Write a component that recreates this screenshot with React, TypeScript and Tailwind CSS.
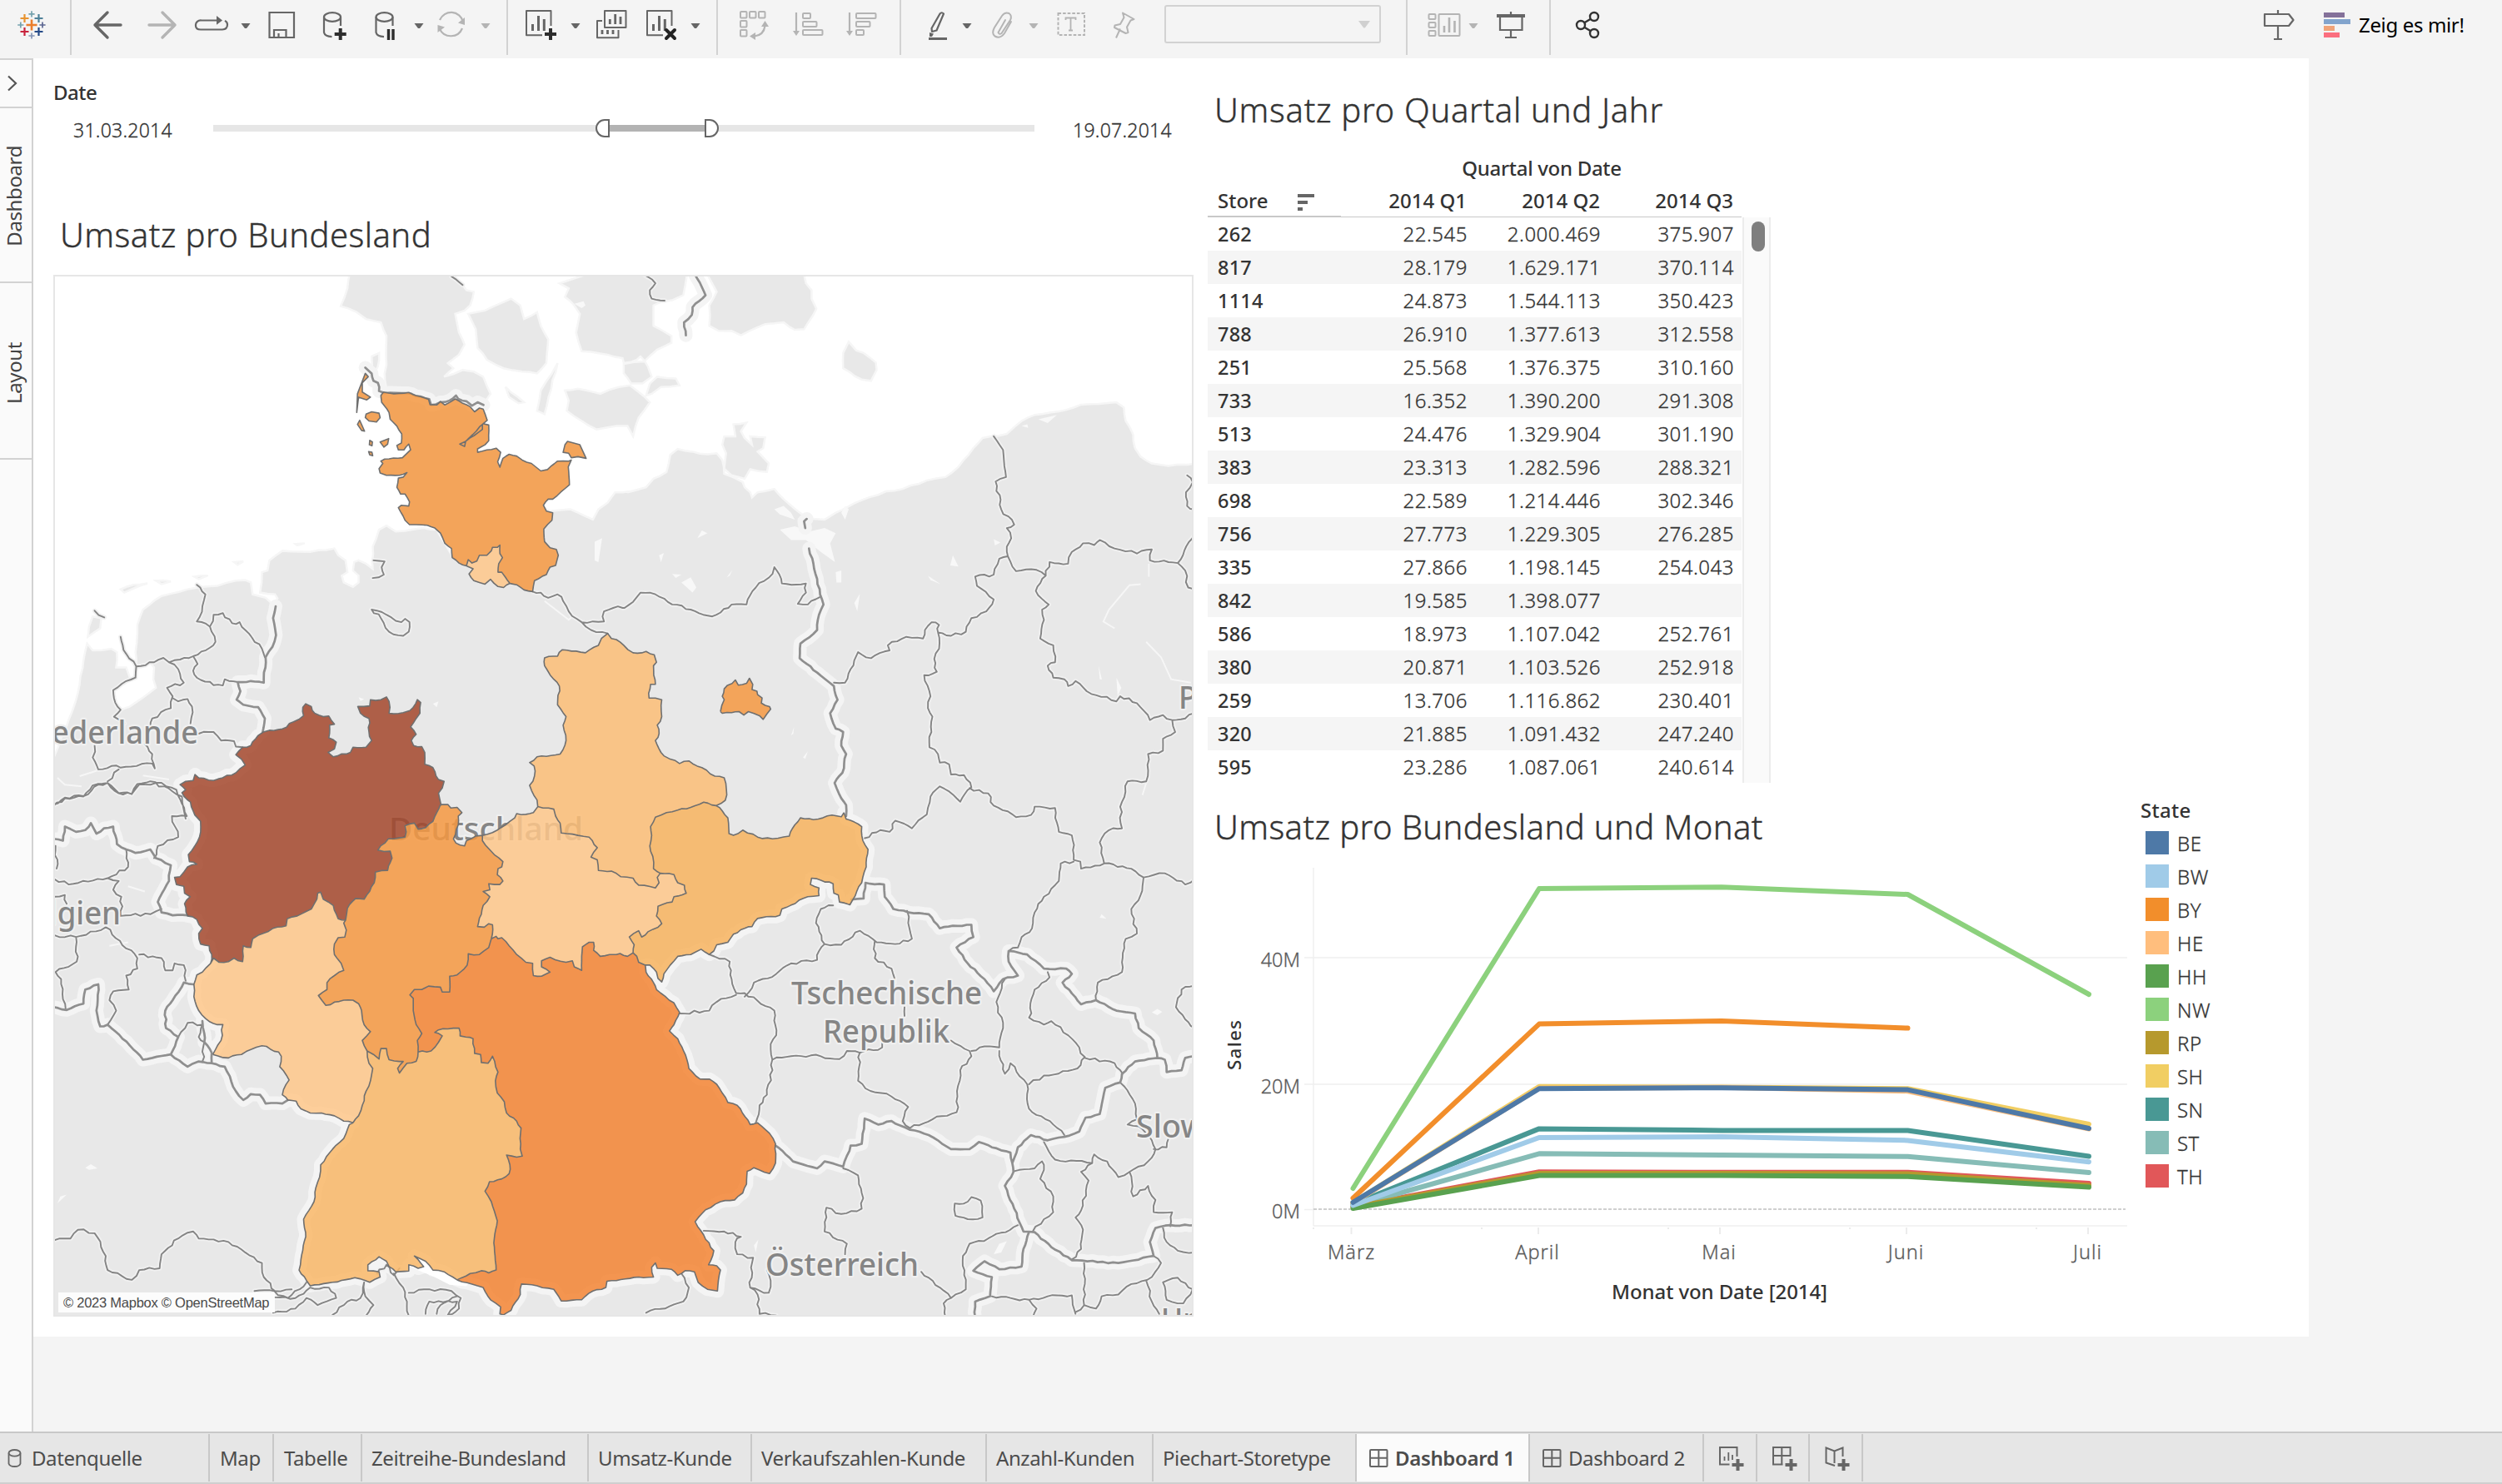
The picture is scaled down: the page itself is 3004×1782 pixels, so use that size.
import React from "react";

/* ------------------------------------------------------------------ */
/* Toolbar                                                             */
/* ------------------------------------------------------------------ */

const DARK = "#666666";
const LIGHT = "#b4b4b4";

function Cell({ x, w, children }: { x: number; w: number; children?: React.ReactNode }) {
  return (
    <svg width={w} height={70} viewBox={`${x} 0 ${w} 70`} className="shrink-0" fill="none">
      {children}
    </svg>
  );
}

function Sep() {
  return <div className="h-[66px] w-[2px] shrink-0 bg-[#d2d2d2]" />;
}

function Caret({ x, c = DARK }: { x: number; c?: string }) {
  return <path d={`M${x - 5.5} 28h11l-4 5.4q-1.5 1.4-3 0z`} fill={c} />;
}

function Plus({ x, y, r, w, c }: { x: number; y: number; r: number; w: number; c: string }) {
  return <path d={`M${x - r} ${y}h${r * 2}M${x} ${y - r}v${r * 2}`} stroke={c} strokeWidth={w} />;
}

function ChartSheet({ dx }: { dx: number }) {
  return (
    <g transform={`translate(${dx} 0)`} stroke={DARK}>
      <path d="M651 42.3H632V13H661.5V31" strokeWidth="2" strokeLinejoin="round" />
      <path d="M639.5 29v8M646.5 19v18M653.3 23v14" strokeWidth="3" />
    </g>
  );
}

function Toolbar() {
  return (
    <header className="flex h-[70px] w-full shrink-0 items-start bg-[#f4f4f4]">
      <Cell x={0} w={84}>
        <Plus x={38} y={30} r={6.5} w={2.6} c="#eb7e2c" />
        <Plus x={29.5} y={22} r={5} w={2.2} c="#e8932f" />
        <Plus x={46.5} y={22} r={5} w={2.2} c="#4f8299" />
        <Plus x={29.5} y={38} r={5} w={2.2} c="#c8233c" />
        <Plus x={46.5} y={38} r={5} w={2.2} c="#254a87" />
        <Plus x={38} y={16.8} r={3.6} w={1.7} c="#74a1ad" />
        <Plus x={24.8} y={30} r={3.6} w={1.7} c="#74a1ad" />
        <Plus x={51} y={30} r={3.6} w={1.7} c="#5b6591" />
        <Plus x={38} y={43} r={3.6} w={1.7} c="#8494b5" />
      </Cell>
      <Sep />
      <Cell x={86} w={522}>
        <path d="M145 30H114M129 15L114 30L129 45" stroke={DARK} strokeWidth="3.4" strokeLinecap="round" strokeLinejoin="round" />
        <path d="M179 30H210M195 15L210 30L195 45" stroke={LIGHT} strokeWidth="3.4" strokeLinecap="round" strokeLinejoin="round" />
        <path d="M261 24.5H242a6 5.5 0 0 0-7 6v.5q0 4.5 6 4.5H267q6-.4 6-6 0-3-3-4.6" stroke={DARK} strokeWidth="2.2" />
        <path d="M260 19l7 5.4-7 5.4z" fill={DARK} />
        <Caret x={295} />
        <path d="M323.5 15H353V45H323.5zM329 45V36H343.5V45M334.5 45v-5" stroke={DARK} strokeWidth="2.2" />
        <ellipse cx="399" cy="20.5" rx="10" ry="5.3" stroke={DARK} strokeWidth="2.2" />
        <path d="M389 20.5V39q1 4.5 9.5 5.2M409 20.5V31" stroke={DARK} strokeWidth="2.2" />
        <Plus x={408.7} y={41} r={7} w={4} c="#2d2d2d" />
        <ellipse cx="461.5" cy="20.5" rx="10" ry="5.3" stroke={DARK} strokeWidth="2.2" />
        <path d="M451.500 20.5V39q1 4.500 9.500 5.200M471.500 20.5V31" stroke={DARK} strokeWidth="2.2" />
        <path d="M466.500 35v13M472 35v13" stroke="#2d2d2d" strokeWidth="3.400" />
        <Caret x={503} />
        <path d="M528 24A14.800 14.800 0 0 1 556 26M555 34A14.800 14.800 0 0 1 528 35" stroke={LIGHT} strokeWidth="2.200" />
        <path d="M550 27.500l8 2.500V21zM534 32.500l-8.500-2.500v9z" fill={LIGHT} />
        <Caret x={583} c={LIGHT} />
      </Cell>
      <Sep />
      <Cell x={610} w={250}>
        <ChartSheet dx={0} />
        <Plus x={661} y={41} r={7} w={4} c="#2d2d2d" />
        <Caret x={691} />
        <path d="M723 25H717V45.300H742.500V36M726 13H751.500V33H726z" stroke={DARK} strokeWidth="2" strokeLinejoin="round" />
        <path d="M732.300 23v6M738.700 17v12M745 20v9M723 36v5M729.500 36v5M736 36v5" stroke={DARK} strokeWidth="2.800" />
        <ChartSheet dx={145} />
        <path d="M800 36l10 10M810 36l-10 10" stroke="#222" strokeWidth="4" strokeLinecap="round" />
        <Caret x={835} />
      </Cell>
      <Sep />
      <Cell x={862} w={218}>
        <g stroke={LIGHT} strokeWidth="2">
          <rect x="889" y="14" width="7.500" height="7.500" rx="1" />
          <rect x="900" y="14" width="7.500" height="7.500" rx="1" />
          <rect x="911" y="14" width="7.500" height="7.500" rx="1" />
          <rect x="889" y="25" width="7.500" height="7.500" rx="1" />
          <rect x="889" y="36" width="7.500" height="7.500" rx="1" />
          <path d="M918.500 31Q917 42 906 43.500M956 15v24M1020 15v24" strokeWidth="2.200" />
          <rect x="964" y="16" width="9" height="6" rx="1" />
          <rect x="964" y="26" width="16.500" height="6" rx="1" />
          <rect x="964" y="36" width="23.500" height="6" rx="1" />
          <rect x="1028" y="16" width="23.500" height="6" rx="1" />
          <rect x="1028" y="26" width="16.500" height="6" rx="1" />
          <rect x="1028" y="36" width="9" height="6" rx="1" />
        </g>
        <path d="M918.500 25l4.500 7h-9zM900 43.500l7-4.500v9zM952 37h8l-4 6zM1016 37h8l-4 6z" fill={LIGHT} />
      </Cell>
      <Sep />
      <Cell x={1082} w={316}>
        <path d="M1115 46.500h22" stroke={DARK} strokeWidth="3" />
        <path d="M1128.500 16.500q2-2.500 4.500 0L1124.500 36.500l-5.500 1.500-.5-4z" stroke={DARK} strokeWidth="2.200" strokeLinejoin="round" />
        <path d="M1116 39l5 1.500-2 3.500h-3z" fill={DARK} />
        <Caret x={1161} />
        <path d="M1214 26L1206 40q-5 7-11.500 3.500Q1190 40 1194 33L1203 19q3.500-5 8.500-3 4 3 1.500 8L1202.500 40q-3 2-4-1l8.500-15" stroke={LIGHT} strokeWidth="2" strokeLinecap="round" />
        <Caret x={1241} c={LIGHT} />
        <rect x="1270.500" y="16" width="31.500" height="26" stroke={LIGHT} strokeWidth="2" strokeDasharray="3.600 2" />
        <path d="M1279.500 24v-2.500h12V24M1285.500 21.500v15M1283 36.500h5" stroke={LIGHT} strokeWidth="1.800" />
        <path d="M1348 15.500l13.500 7.500-4 1.500-4.500 8 1.500 6.500-3 1-13.500-7 .5-2.500 6.500-1.500 4.500-8zM1345 34.500l-5 11" stroke={LIGHT} strokeWidth="2" strokeLinejoin="round" />
      </Cell>
      <div className="mt-[6px] flex h-[46px] w-[260px] shrink-0 items-center justify-end rounded-[3px] border-2 border-[#d2d2d2] pr-[11px]">
        <svg width="14" height="9" viewBox="0 0 14 9">
          <path d="M0 0h14L8.200 8q-1.200 1-2.400 0z" fill="#d0d0d0" />
        </svg>
      </div>
      <Cell x={1658} w={30} />
      <Sep />
      <Cell x={1690} w={170}>
        <g stroke={LIGHT} strokeWidth="2">
          <rect x="1715.500" y="17" width="8" height="6" rx="1" />
          <rect x="1715.500" y="27" width="8" height="6" rx="1" />
          <rect x="1715.500" y="37" width="8" height="6" rx="1" />
          <rect x="1727.500" y="17" width="25" height="26" rx="1" />
          <path d="M1734 31v8M1740 21v18M1746.500 25v14" strokeWidth="2.600" />
        </g>
        <Caret x={1769} c={LIGHT} />
        <path d="M1797 19h34" stroke={DARK} strokeWidth="4" />
        <path d="M1801 20v16h26.500V20M1814 14v4M1814 36v9M1807 45h14" stroke={DARK} strokeWidth="2.200" />
      </Cell>
      <Sep />
      <Cell x={1862} w={842}>
        <g stroke="#333" strokeWidth="2.400">
          <circle cx="1898" cy="30" r="5" />
          <circle cx="1914" cy="20" r="5" />
          <circle cx="1914" cy="40" r="5" />
          <path d="M1902.300 27.300l7.500-4.600M1902.300 32.700l7.500 4.600" />
        </g>
      </Cell>
      <Cell x={2704} w={118}>
        <path d="M2719 17h29l5.500 7-5.500 7h-29zM2735 12v5M2735 31v16M2730 47h10" stroke={DARK} strokeWidth="2.200" strokeLinejoin="round" />
        <path d="M2790 15h25v6h-25z" fill="#847199" />
        <path d="M2790 23h32v6h-32z" fill="#82a4cd" />
        <path d="M2790 31h13v6h-13z" fill="#f0a378" />
        <path d="M2790 39h19v6h-19z" fill="#fb6f7f" />
      </Cell>
      <span className="ml-[10px] mt-[18px] text-[24px] leading-6 tracking-[-0.35px] whitespace-nowrap text-black">Zeig es mir!</span>
    </header>
  );
}

/* ------------------------------------------------------------------ */
/* Side rail                                                           */
/* ------------------------------------------------------------------ */

function SideTab({ label, className }: { label: string; className: string }) {
  return (
    <div className={"flex w-full shrink-0 items-center justify-center border-b-2 border-[#d2d2d2] " + className}>
      <span className="rotate-180 text-[24px] leading-6 tracking-[-0.4px] text-[#444] [writing-mode:vertical-rl]">{label}</span>
    </div>
  );
}

function SideRail() {
  return (
    <aside className="flex h-full w-[40px] shrink-0 flex-col border-t-2 border-r-2 border-[#d2d2d2] bg-[#fafafa]">
      <div className="flex h-[58px] w-full items-center border-b-2 border-[#d2d2d2] pl-[8px]">
        <svg width="14" height="20" viewBox="0 0 14 20" fill="none">
          <path d="M2 1.500L11 10L2 18.500" stroke="#555" strokeWidth="2.200" />
        </svg>
      </div>
      <SideTab label="Dashboard" className="h-[210px] pt-[3px] pr-[5px]" />
      <SideTab label="Layout" className="h-[212px] pt-[6px] pr-[5px]" />
    </aside>
  );
}

/* ------------------------------------------------------------------ */
/* Map geometry                                                        */
/* ------------------------------------------------------------------ */

type Pt = [number, number];

/* The map sheet is digitised in four tiles, each with its own grid. */
const TILES: Record<string, [number, number, number, number]> = {
  A: [60, 330, 2.24, 2.45],
  B: [740, 330, 2.24, 2.45],
  C: [60, 940, 2.24, 2.3758],
  D: [740, 940, 2.24, 2.3758],
};

function pts(src: string): Pt[] {
  let tile = TILES.A;
  const out: Pt[] = [];
  for (const tok of src.trim().split(/\s+/)) {
    if (TILES[tok]) {
      tile = TILES[tok];
      continue;
    }
    const [x, y] = tok.split(",").map(Number);
    out.push([tile[0] + x / tile[2], tile[1] + y / tile[3]]);
  }
  return out;
}

let seed = 7;
function rnd() {
  seed = (seed * 16807) % 2147483647;
  return seed / 2147483647 - 0.5;
}

/* Adds the small-scale wiggle of an administrative boundary. */
function rough(p: Pt[], amp: number, step = 6): Pt[] {
  const out: Pt[] = [p[0]];
  for (let i = 1; i < p.length; i++) {
    const [ax, ay] = p[i - 1];
    const [bx, by] = p[i];
    const len = Math.hypot(bx - ax, by - ay);
    const n = Math.max(1, Math.round(len / step));
    for (let k = 1; k < n; k++) {
      const t = k / n;
      const o = rnd() * 2 * amp;
      out.push([ax + (bx - ax) * t - ((by - ay) / len) * o, ay + (by - ay) * t + ((bx - ax) / len) * o]);
    }
    out.push([bx, by]);
  }
  return out;
}

const d = (p: Pt[], close = false) => "M" + p.map(([x, y]) => `${x.toFixed(1)} ${y.toFixed(1)}`).join("L") + (close ? "Z" : "");
const rev = (p: Pt[]) => [...p].reverse();
const line = (src: string, amp = 1.6) => rough(pts(src), amp);

const LAND = [
  "A 10,1420 50,1310 75,1230 100,1085 115,1105 165,1100 180,1110 178,1155 205,1155 215,1185 205,1200 170,1222 172,1245 190,1280 215,1270 285,1215 278,1190 280,1155 270,1142 232,1150 230,1110 235,1030 250,985 300,945 370,925 410,918 450,915 500,900 525,898 540,905 545,940 580,950 600,970 612,952 605,940 565,935 570,875 585,870 590,840 625,812 700,815 765,805 775,825 795,840 800,875 785,885 790,905 815,918 830,905 830,885 815,870 818,845 830,840 850,850 868,865 868,800 885,750 905,738 930,755 1005,745 1040,750 1065,795 1085,830 1120,856 1250,800 1335,690 1345,695 1400,690 1440,710 1460,720 1475,690 1500,670 1520,640 1560,637 B 30,640 80,625 100,600 135,580 145,530 165,512 245,528 270,525 285,545 290,585 340,610 345,625 360,640 365,655 380,640 425,630 450,660 500,705 530,718 560,720 590,700 640,672 725,637 770,630 835,605 885,595 920,565 960,510 985,480 1050,468 1090,430 1125,412 1190,402 1250,382 1345,375 1365,390 1370,430 1390,470 1395,510 1410,535 1440,555 1485,562 1560,555 D 1560,1530 C 5,1530 A 5,1430",
  "A 888,345 905,335 900,290 905,265 905,180 890,140 850,130 825,110 782,92 800,40 805,0 1075,0 1110,30 1120,45 1140,50 1130,90 1115,105 1090,115 1100,170 1115,205 1100,235 1070,260 1085,275 1060,300 1110,280 1140,285 1165,300 1185,350 1165,380 1090,420 1000,420",
  "A 1125,115 1170,105 1240,70 1265,90 1275,130 1310,110 1320,150 1340,190 1335,260 1310,290 1270,285 1220,275 1175,250 1150,215 1145,160",
  "A 1370,25 1395,40 1385,65 1410,90 1425,115 1415,170 1430,225 1500,235 1540,245 B 20,260 55,250 65,240 85,270 95,300 70,320 40,320 20,290 20,262 75,255 110,220 148,200 148,180 100,150 100,90 120,80 150,75 180,60 190,0 A 1440,0",
  "A 1385,340 1420,335 1480,350 1530,330 1560,325 B 60,345 90,375 60,420 45,475 30,445 0,445 A 1470,455 1430,430 1390,400 1395,370",
  "B 80,355 90,320 110,300 160,305 170,325 120,330 95,350",
  "A 1365,260 1330,410 1310,400 1320,340 1350,290",
  "A 1225,330 1275,375 1260,378 1235,360",
  "B 245,0 505,0 510,25 525,45 525,70 538,100 505,160 480,162 450,140 400,145 335,178 310,165 275,165 250,150 250,90 270,50",
  "B 625,197 645,222 665,230 698,258 700,280 685,312 660,308 610,275 610,230",
  "B 315,440 350,435 335,460 345,480 365,500 360,475 400,478 395,510 380,520 410,555 405,580 360,572 345,600 310,590 290,570 295,525 285,500 290,475 320,475",
  "A 115,1005 138,1010 135,1040 102,1065 105,1035",
  "A 190,925 225,912 262,908 230,920 200,935",
  "A 285,900 325,902 300,910",
  "A 388,888 425,885 400,895",
  "A 495,845 520,843 505,853",
  "A 660,792 685,790 665,796",
  "A 865,240 885,230 882,270 868,300",
];

const LAKES = [
  "B 440,750 480,740 520,755 560,745 590,760 575,790 588,845 550,815 510,780 470,780",
  "B 425,690 450,680 470,700 480,720 440,705",
  "B 605,700 615,680 625,690 615,720",
  "B 218,775 230,752 245,760",
  "B 175,905 200,890 215,920 205,935",
  "B 150,880 175,882 160,892",
  "B 115,825 128,818 120,845",
  "B 297,890 312,868 305,885",
  "B 590,875 605,870 605,905 592,905",
  "B 640,965 655,938 648,990",
  "B 905,825 920,858 898,855",
  "B 838,885 872,910 845,898",
  "B 1015,778 1033,788 1018,796",
  "B 1135,425 1185,412 1160,436",
  "B 1090,445 1105,440 1108,450",
  "B 1345,1185 1358,1215 1348,1240",
  "B 1297,1150 1306,1190 1300,1190",
  "B 470,1355 478,1330 476,1350",
  "B 502,1420 515,1402 508,1424",
  "A 1465,785 1485,775 1475,845 1465,840",
  "A 1030,1262 1045,1255 1040,1272",
  "A 830,1243 845,1248 835,1254",
  "A 1410,85 1435,78 1440,90 1430,98",
  "C 95,1098 110,1088 128,1100 105,1104",
  "C 20,1200 28,1180 45,1175",
  "D 1015,1345 1030,1315 1050,1308 1035,1340",
  "D 370,1320 382,1303 375,1340",
  "D 1440,655 1455,645 1468,653 1455,663",
  "D 1300,385 1305,375 1318,388",
];

const STREAKS = [
  "B 1410,910 1380,913 1325,985 1310,1020 1340,1040",
  "B 1425,1080 1465,1125 1492,1190 1545,1200",
  "B 1432,850 1432,888",
  "A 1330,960 1395,1015 1402,1008",
  "A 80,1475 180,1440",
  "A 20,1480 40,1500 85,1505",
  "A 250,1473 320,1485",
  "C 160,465 210,455",
  "C 210,295 255,310",
  "D 1415,35 1425,0",
];

/* Shared borders of the federal states, each digitised once. */
const a = {
  shOut: line(
    "A 1120,856 1100,848 1082,832 1080,805 1062,790 1050,760 1035,745 1015,737 985,735 967,735 955,722 937,685 945,678 965,680 967,668 955,645 943,645 933,625 937,598 950,595 960,582 940,590 905,590 888,583 885,570 895,555 890,548 900,542 948,538 970,515 965,498 952,515 937,515 933,502 945,495 946,468 933,445 915,425 912,405 892,375 890,355 897,345 925,350 965,346 985,355 1018,366 1022,382 1040,383 1050,373 1062,383 1090,365 1110,378 1130,388 1142,403 1155,392 1165,395 1176,428 1163,440 1163,455 1118,490 1115,505 1102,498 1118,490 1165,438 1180,442 1180,488 1170,500 1150,512 1150,522 1200,510 1212,522 1204,550 1210,566 1218,540 1235,528 1255,533 1270,545 1295,555 1320,577 1338,573 1365,548 1395,548 1402,545 1394,565 1397,618 1352,660 1340,660 1327,678 1335,695 1352,700 1350,722 1328,748 1330,785 1345,803 1362,808 1367,825 1360,855 1345,860 1335,882 1303,900 1298,932 1275,927 1255,912 1237,908",
    0.5
  ),
  shHh: line("A 1237,908 1225,890 1215,875 1205,875 1207,850 1217,832 1210,820 1210,795 1203,802 1190,802 1187,812 1175,825 1155,825 1148,842 1135,848 1125,838 1120,856", 0.8),
  hhOut: line("A 1120,856 1138,865 1127,880 1140,900 1155,905 1170,910 1185,896 1205,917 1220,920 1237,908", 0.8),
  nwW: line(
    "C 432,515 435,490 428,465 405,460 400,430 410,415 395,390 370,380 362,345 377,325 362,315 360,295 340,290 335,270 350,268 370,240 395,232 375,225 372,205 402,155 405,110 385,80 378,55 355,28 A 365,1515 350,1500 365,1490 385,1488 390,1470 400,1480 440,1488 500,1465 525,1442 515,1425 500,1412 518,1390 540,1385 560,1355",
    1.2
  ),
  nwN: line(
    "A 560,1355 590,1340 625,1336 655,1315 682,1297 680,1272 688,1262 703,1270 712,1290 735,1300 750,1298 765,1322 752,1325 750,1362 770,1375 765,1395 748,1405 762,1418 808,1405 815,1390 850,1390 865,1370 858,1345 858,1305 835,1290 828,1270 860,1268 862,1250 890,1250 905,1242 912,1255 912,1290 950,1288 968,1282 988,1250 997,1258 995,1290 985,1305 970,1330 985,1352 972,1370 978,1385 1000,1388 1008,1405 1008,1440 1030,1450 1045,1485 1060,1490 1055,1510 1045,1525 1052,1560 C 1050,62",
    1.1
  ),
  nwHe: line("C 1050,62 1040,85 1030,110 1010,128 990,132 980,115 955,122 958,140 955,155 910,160 882,192 915,195 920,215 908,250 875,255 872,285 845,332 822,330 800,358 795,392", 1.1),
  nwRp: line("C 795,392 775,388 762,350 735,332 728,312 720,315 718,332 703,360 665,380 638,388 635,408 600,415 560,435 545,445 540,470 520,465 518,510 505,507 495,500 480,510 455,512 440,500 432,515", 1.1),
  rpW: line("C 432,515 410,540 395,548 387,575 387,610 400,650 430,682 450,690 465,690 460,735 438,775", 1),
  rpS1: line("C 438,775 480,785 515,775 570,750 615,768 622,780 618,810 643,848 628,875 625,890 640,905", 1.2),
  rpS2: line("C 640,905 662,908 675,930 700,942 730,942 765,950 790,965 815,970", 0.8),
  rpBw: line("C 815,970 830,950 840,920 850,880 862,850 868,815 858,800 853,765", 0.9),
  rpHe: line("C 853,765 840,735 862,710 845,690 838,650 830,630 815,620 790,620 742,635 722,607 745,590 745,570 765,550 790,535 783,515 765,490 765,460 775,442 793,440 797,420 790,400 795,392", 0.9),
  heBw: line("C 853,765 870,775 885,788 890,758 905,758 912,790 940,795 950,795 935,815 940,828 960,800 985,795 990,768", 0.8),
  heBy: line("C 990,768 988,735 1000,715 985,690 977,650 977,615 968,605 980,590 1000,590 1018,580 1050,583 1055,597 1075,597 1075,552 1095,548 1122,520 1125,488 1155,490 1180,470 1187,445", 0.9),
  heTh: line("C 1187,445 1190,405 1180,402 1168,412 1150,410 1160,375 1165,350 1183,325 1165,310 1183,305 1180,288 1210,290 1218,280 1203,262 1205,245 1215,240 1218,225 1195,205 1182,190 1163,165 1163,150", 0.9),
  heOut: line("C 1050,62 1070,62 1078,72 1095,70 1108,85 1098,95 1098,120 1085,160 1092,172 1115,180 1120,165 1145,152 1163,150", 0.8),
  thOut: line("C 1163,150 1190,142 1225,120 1250,100 1255,88 1280,90 1300,85 1312,68", 1),
  thSt: line("C 1312,68 1355,75 1360,95 1372,115 1375,143 1420,150 1450,155 1472,185 1455,212 1472,220 1475,250 1510,252 D 12,268 45,272 60,292 105,300 115,285 110,270 118,258", 0.9),
  thSn: line("D 118,258 155,262 165,285 183,292 188,315 155,325 150,340 112,352 108,380 122,402 112,412 85,425 68,440 60,422 35,440 48,462 45,485", 0.9),
  thBy: line("D 45,485 30,495 10,487 C 1523,490 1505,490 1480,495 1462,478 1462,455 1450,455 1432,468 1430,535 1410,525 1405,508 1388,512 1345,498 1322,508 1322,525 1345,540 1322,552 1300,550 1298,515 1280,512 1255,490 1235,465 1215,442 1205,445 1200,438 1187,445", 0.9),
  snSt: line("D 118,258 100,245 98,210 90,180 95,150 92,125 105,98 135,85 165,78 200,70 235,55 268,65", 0.9),
  stOut: line(
    "D 268,65 293,50 B 297,1530 290,1480 265,1475 230,1450 195,1430 170,1438 145,1425 128,1415 105,1370 115,1350 110,1325 122,1300 122,1250 105,1245 88,1245 92,1205 105,1205 100,1150 108,1140 102,1118 80,1108 45,1112 20,1090 0,1073 A 1510,1070 1500,1055 1483,1070 1475,1090 1440,1112 1378,1103 1365,1122 1330,1127 1330,1150 1355,1190 1370,1210 1365,1265 1388,1300 1380,1325 1388,1370 1372,1410 1310,1418 1290,1435 1302,1445 1303,1475 1290,1502 1310,1545 C 1312,68",
    1.2
  ),
  snN: line("D 268,65 285,80 300,100 303,145 315,150 340,135 380,155 420,160 465,152 480,120 495,100 530,105 580,92 605,97 612,85", 1),
  snE: line(
    "D 612,85 618,103 640,112 660,125 663,165 677,190 672,240 660,285 635,335 628,348 600,340 597,320 585,315 583,288 550,278 525,272 522,290 545,300 545,322 515,325 445,360 440,378 380,387 365,410 345,415 315,432 300,455 270,462 262,480 250,490 228,475 200,490 165,495 145,520 128,545 122,568 112,558 108,540 90,520 78,520",
    1
  ),
  snBy: line("D 78,520 60,512 55,495 45,485", 0.8),
  byOut: line(
    "D 78,520 80,540 100,570 108,590 155,628 170,655 155,690 143,708 165,730 190,790 195,815 225,845 250,845 270,860 300,912 325,920 360,975 380,970 412,1000 428,1030 428,1085 412,1115 370,1098 352,1108 350,1145 340,1170 318,1190 280,1195 240,1218 212,1252 235,1290 262,1335 248,1375 270,1378 280,1390 272,1450 245,1445 220,1425 210,1395 185,1392 165,1405 148,1388 110,1385 105,1370 95,1382 100,1410 60,1410 0,1420 C 1498,1422 1495,1440 1460,1450 1430,1475 1375,1478 1355,1445 1310,1435 1268,1430 1265,1460 1240,1505 1220,1518 1210,1515 1212,1495 1185,1475 1165,1440 1135,1430 1095,1418",
    0.9
  ),
  byBw: line(
    "C 1095,1418 1130,1400 1160,1392 1180,1398 1200,1390 1197,1350 1195,1300 1203,1250 1187,1195 1170,1165 1182,1138 1215,1130 1235,1115 1237,1090 1228,1062 1255,1068 1270,1065 1265,1045 1267,985 1255,965 1228,942 1222,910 1203,885 1198,850 1205,825 1190,780 1178,800 1160,798 1158,775 1142,772 1138,730 1118,725 1103,722 1100,700 1070,702 1045,705 1035,712 1055,722 1045,740 1025,765 990,768",
    0.9
  ),
  bwOut: line(
    "C 815,970 805,975 790,1015 760,1045 728,1090 725,1125 715,1155 710,1195 682,1245 688,1295 675,1360 670,1390 690,1420 700,1435 760,1425 820,1412 860,1425 888,1410 885,1395 855,1392 855,1375 885,1352 905,1365 912,1380 930,1395 965,1393 965,1375 990,1385 1005,1380 980,1350 1010,1365 1030,1390 1060,1395 1095,1418",
    0.7
  ),
  be: line("B 280,1285 290,1250 285,1240 290,1218 320,1192 328,1207 350,1202 358,1187 367,1205 365,1220 378,1225 380,1235 392,1245 390,1260 412,1270 415,1278 405,1292 395,1308 385,1297 355,1285 343,1295 330,1285 310,1288 285,1290 280,1285", 0.9),
};

const ISLANDS = [
  "A 848,290 856,300 840,318 840,345 862,360 852,368 830,360 825,405 827,350",
  "A 850,410 865,403 885,407 888,420 878,433 858,430 848,420",
  "A 833,428 846,460 838,458 827,440",
  "A 888,492 911,482 908,498 898,507",
  "A 860,487 867,492 866,503 859,500",
  "A 857,520 866,522 868,532 860,530",
  "A 1385,500 1392,490 1425,500 1442,540 1420,535 1402,538 1395,525 1380,522",
];

const STATES: { id: string; fill: string; shape: string }[] = [
  { id: "NW", fill: "#a3472c", shape: d([...a.nwW, ...a.nwN, ...a.nwHe, ...a.nwRp], true) },
  { id: "SH", fill: "#f59841", shape: d([...a.shOut, ...a.shHh], true) + ISLANDS.map((i) => d(pts(i), true)).join("") },
  { id: "HH", fill: "#fec78a", shape: d([...a.hhOut, ...a.shHh], true) },
  { id: "BE", fill: "#f59841", shape: d(a.be, true) },
  { id: "HE", fill: "#f59841", shape: d([...a.heOut, ...rev(a.heTh), ...rev(a.heBy), ...rev(a.heBw), ...a.rpHe, ...rev(a.nwHe)], true) },
  { id: "RP", fill: "#fec78a", shape: d([...a.rpW, ...a.rpS1, ...a.rpS2, ...a.rpBw, ...a.rpHe, ...a.nwRp], true) },
  { id: "TH", fill: "#fec78a", shape: d([...a.thOut, ...a.thSt, ...a.thSn, ...a.thBy, ...a.heTh], true) },
  { id: "ST", fill: "#fcbd76", shape: d([...a.stOut, ...a.thSt, ...a.snSt], true) },
  { id: "SN", fill: "#f7b35e", shape: d([...a.snN, ...a.snE, ...a.snBy, ...rev(a.thSn), ...a.snSt], true) },
  { id: "BW", fill: "#f9b767", shape: d([...a.bwOut, ...a.byBw, ...rev(a.heBw), ...rev(a.rpBw)], true) },
  { id: "BY", fill: "#f38433", shape: d([...a.byOut, ...a.byBw, ...a.heBy, ...rev(a.thBy), ...rev(a.snBy)], true) },
];

const COUNTRY = [
  "A 848,273 865,290 870,312 882,318 885,342 900,348 960,348 1020,366 1025,383 1050,375 1075,370 1092,355 1098,365 1120,372 1135,385 1150,375 1166,383",
  "A 607,975 600,1010 608,1060 598,1095 580,1125 575,1200 540,1195 505,1198 512,1225 502,1250 520,1265 560,1272 578,1305 572,1345",
  "C 10,160 35,165 40,125 70,140 95,135 110,115 125,145 145,130 170,125 180,175 205,190 230,200 270,190 285,215 325,235 320,280 290,340 300,370 330,378 370,378",
  "C 10,640 45,648 90,630 95,590 130,575 125,650 135,695 155,690 215,750 250,790 325,775 370,810 400,795 435,800 470,810 500,880 520,905 540,888 565,890 580,915 625,915 640,905",
  "C 385,575 360,570 330,620 310,650 312,700 345,725 325,775",
  "C 410,680 415,715 415,740 435,770 435,800",
  "B 212,0 240,60 205,95 203,118 182,140 187,178",
  "B 512,718 505,725 508,745",
  "B 518,805 530,850 548,940 557,970 545,1000 540,1045 495,1085 493,1128 540,1170 585,1210 595,1250 575,1290 590,1335 610,1345 605,1385 618,1410 608,1465 587,1495 605,1540 618,1560 D 618,95",
  "D 632,333 665,330 670,285 720,290 722,325 745,360 800,372 840,375 870,415 905,408 955,405 960,440 915,470 945,515 990,560 1015,595 1040,560 1080,550 1055,510 1055,480 1105,490 1150,530 1210,530 1225,545 1200,570 1250,632 1290,620 1345,650 1395,658 1405,700 1445,735 1455,785 1475,790 1480,825 1520,820 1530,785 1555,780",
  "D 1455,785 1395,795 1360,830 1355,855 1315,870 1300,945 1262,955 1245,995 1205,1010 1160,1020 1115,1005 1080,1040 1065,1085",
  "D 428,1035 475,1080 540,1100 560,1080 610,1095 630,1035 660,1030 668,958 705,975 740,965 790,990 840,1005 900,1045 950,1045 975,1025 1010,1040 1060,1055 1065,1085 1068,1110 1045,1150 1070,1215 1095,1280 1125,1282 1170,1325 1225,1362 1350,1370 1445,1350 1435,1310 1450,1270 1490,1262 1555,1262",
  "D 1110,1282 1095,1330 1090,1380 1030,1388 990,1365 960,1392 1010,1410 1005,1465 965,1480 965,1525",
];

const ADMIN = [
  "A 395,912 418,940 410,975 395,1020 430,1035 445,1080 430,1097 385,1122 350,1132 320,1140 305,1127 280,1140 232,1152 230,1185 205,1195 170,1222 172,1245 190,1280 172,1300 200,1320",
  "A 430,1035 440,1000 465,995 490,1025 510,1022 570,1100 578,1125",
  "A 385,1122 397,1145 385,1165 395,1185 440,1207 465,1208 470,1190 505,1198",
  "A 320,1140 345,1160 360,1200 315,1215 330,1240 325,1275 275,1305 270,1330",
  "A 330,1245 345,1255 370,1248 382,1270 378,1320",
  "A 400,1350 440,1345 460,1370 495,1372 500,1388 518,1390",
  "A 120,1385 115,1420 130,1455 165,1445 190,1450 275,1438 282,1452 275,1410 255,1380",
  "A 10,1562 40,1540 90,1535 115,1502 155,1495 185,1525 220,1528 235,1498 270,1490 330,1520 355,1535 365,1600",
  "A 185,1455 155,1490",
  "A 865,985 905,1000 930,1018 945,1022 955,1012 967,1022 965,1050 950,1062 912,1050 890,1010 865,985",
  "A 870,840 900,843 892,860 898,882 868,892",
  "A 120,988 146,1008",
  "A 190,1065 205,1115 232,1152",
  "A 1080,5 1110,30",
  "B 75,0 105,25 90,45 95,70 130,76",
  "A 1298,932 1320,935 1340,950 1365,940 1380,960 1395,990 1430,1022 1455,1045 1500,1055",
  "A 1430,1022 1490,1020 1490,990 1515,980 1540,980 B 22,980 45,962 65,935 105,940 150,970 200,985 258,1005 310,970 350,970 375,920 420,880 425,860 445,908 510,908 510,935 488,968 515,970 548,948",
  "B 1015,475 1040,515 1048,595 1020,608 1035,690 1070,735 1050,745 1062,775 1050,800 1053,828 1030,835 1015,882 965,888 970,915 1015,955 995,990 955,1010 940,1050 900,1062 865,1052 868,1030 848,1022 830,1045 825,1070 780,1065 730,1090 735,1105 685,1128 650,1110 630,1160 615,1200 585,1200",
  "B 1053,828 1075,872 1130,868 1155,885 1165,845 1215,850 1225,815 1255,790 1285,795 1300,780 1340,805 1385,812 1400,820 1440,808 1435,840 1510,848 1555,765",
  "B 1155,885 1128,930 1163,970 1145,985 1150,1015 1140,1070 1175,1090 1180,1140 1160,1150 1175,1185 1205,1190 1215,1210 1235,1195 1265,1225 1345,1255 1355,1240 1400,1260 1435,1310 1470,1295 1495,1310 1530,1305 1555,1290",
  "B 1510,848 1530,870 1538,920 1555,925",
  "B 1535,590 1550,610 1532,640 1535,680 1555,690",
  "B 865,1052 868,1100 855,1130 862,1168 828,1178 845,1240 838,1275 850,1300 842,1390 865,1410 870,1435 895,1440 900,1470 935,1472 955,1508 925,1550 895,1520 870,1505 845,1535 838,1568 D 835,90 795,130 750,108 735,140 710,135 668,158",
  "B 1495,1310 1503,1345 1470,1365 1470,1400 1430,1410 1425,1490 1375,1490 1355,1565 D 1360,130 1325,135 1300,170 1312,230",
  "D 950,15 1000,30 1015,65 1075,98 1115,92 1125,68 1180,72 1190,140 1225,150 1230,220 1248,225 1250,245 1312,230 1385,245 1418,270 1475,258 1530,290 1555,275",
  "D 1230,225 1195,230 1190,280 1150,325 1125,370 1118,415 1090,440 1080,470 1055,480",
  "D 1418,270 1410,320 1385,360 1400,430 1370,445 1360,540 1295,570 1290,620",
  "D 1555,578 1520,590 1505,640 1530,675 1555,700",
  "D 583,350 550,360 537,400 560,460 545,480 540,505 470,515 430,545 370,570 345,610",
  "D 560,460 605,462 655,422 700,455 750,460 795,445 785,400 782,365",
  "D 695,450 695,500 740,530 748,570",
  "D 775,640 775,665",
  "D 250,490 305,510 310,560 322,600 345,600 425,650 430,720 415,745 420,820 405,890 385,920 375,970",
  "D 170,658 250,650 270,625 322,605",
  "D 420,790 470,780 550,780 600,788 620,765 655,770 715,755 715,740",
  "D 655,770 650,850 670,872 740,895 785,925 770,965 790,985 850,960 915,940 925,820 955,780 950,765 900,735",
  "D 955,765 990,752 1030,755 1040,700 1022,625 1045,560",
  "D 1030,765 1045,830 1060,800 1105,860 1110,930 1175,975 1205,1005",
  "D 1110,860 1150,835 1240,815 1260,782 1215,720 1170,680 1150,690 1110,670 1125,590 1165,555 1160,540",
  "D 1260,785 1340,800 1362,830",
  "D 1355,855 1395,915 1400,960 1375,975 1405,980 1440,1020 1450,1045 1430,1080 1380,1110 1350,1125 1320,1080 1285,1060 1280,1085 1180,1075 1150,1025",
  "D 1280,1085 1250,1110 1270,1135 1250,1220 1235,1240 1255,1275 1250,1330 1225,1360",
  "D 1380,1110 1390,1180 1430,1150 1450,1190 1445,1225 1495,1225 1490,1265",
  "D 1445,1045 1480,1040 1485,1015",
  "D 1070,1108 1125,1100 1145,1080 1150,1090 1140,1130 1175,1180 1175,1225 1150,1245 1120,1280",
  "D 910,1200 945,1195 955,1182 980,1192 985,1240 945,1245 912,1235 910,1200",
  "D 610,1100 650,1120 660,1170 660,1215 605,1230 565,1212 560,1280 620,1315 615,1345",
  "D 235,1278 290,1280 335,1295 320,1310 325,1345 368,1355 360,1440 410,1455 415,1420 405,1390",
  "D 360,1440 380,1460 385,1515 430,1520",
  "D 175,1400 195,1440 180,1480 80,1512",
  "D 820,1395 870,1440 900,1470 940,1445 932,1350 950,1315 1000,1300 1080,1262",
  "D 900,1470 880,1485 885,1525",
  "D 1010,1465 1060,1470 1110,1475 1160,1465 1225,1462 1235,1515",
  "D 1110,1475 1130,1500 1120,1525",
  "D 1258,1370 1258,1490 1290,1500 1305,1465 1350,1460 1385,1430 1440,1410 1465,1370 1445,1350",
  "D 1235,1510 1258,1490",
  "D 1425,1420 1440,1480 1460,1515",
  "D 1470,1425 1510,1412 1550,1445 1525,1485 1480,1475 1470,1425",
  "D 1470,1270 1480,1310 1510,1335 1555,1340",
  "C 10,62 40,42 90,38 130,5 155,0 185,30 220,32 240,5 300,0 340,20 355,60 368,95 328,95 345,155 290,180 280,215",
  "C 15,180 18,245",
  "C 12,275 50,290 155,272 210,240 205,190",
  "C 155,272 185,280 170,305 192,325 190,380 270,375 300,360",
  "C 12,325 40,320 45,345",
  "C 12,435 70,440 150,412 235,500 235,530 205,550 212,590 170,595 160,620 178,650 155,690",
  "C 240,490 300,500 310,535 330,535 335,515 360,520 365,565",
  "C 70,440 72,510 15,540 30,560 42,645",
  "C 345,725 370,685 410,690 400,725 415,740 410,795",
  "C 12,1305 55,1300 75,1275 120,1285 150,1350 155,1390 220,1418 240,1390 295,1385 300,1345 345,1300 385,1280 400,1300 480,1310 570,1370 575,1410 605,1450 650,1445",
  "C 550,1450 590,1447 640,1470 690,1425",
  "C 605,1468 660,1470 700,1440 750,1440 770,1470 720,1490 690,1470 660,1500 600,1512",
  "C 760,1518 800,1480 835,1470 845,1425 848,1465 870,1490 850,1520",
  "C 925,1400 950,1440 960,1480 965,1520",
  "C 965,1455 1020,1445 1080,1450 1105,1470 1100,1500 1070,1518 1095,1480 1020,1480 1010,1515",
  "C 880,1400 905,1375 925,1405 940,1385",
  "C 1040,1515 1050,1490 1095,1465",
];

const adminPath = ADMIN.map((s) => d(line(s, 1.8))).join("");
const countryPath = COUNTRY.map((s) => d(line(s, 0.9))).join("");
const frontier = [a.nwW, a.rpW, a.rpS2, a.bwOut, a.byOut, a.snE].map((p) => d(p)).join("");
const stateLines = Object.values(a).map((p) => d(p)).join("") + ISLANDS.map((i) => d(pts(i), true)).join("");
const landPath = LAND.map((s) => d(rough(pts(s), 0.8, 10), true)).join("");
const LAKE_CONSTANCE = "C 975,1345 1010,1362 1030,1390 1060,1395 1095,1418 1130,1420 1120,1436 1075,1432 1030,1408 1000,1395 965,1378 990,1378";

const LABELS: { t: string; x: number; y: number; w: number; anchor?: "end" }[] = [
  { t: "Niederlande", x: 238, y: 892.5, w: 214, anchor: "end" },
  { t: "Belgien", x: 145, y: 1110, w: 131, anchor: "end" },
  { t: "Deutschland", x: 467, y: 1008.5, w: 233 },
  { t: "Tschechische", x: 950, y: 1205.5, w: 229 },
  { t: "Republik", x: 988, y: 1251.5, w: 152 },
  { t: "Österreich", x: 919, y: 1531.5, w: 184 },
  { t: "Slowakei", x: 1364, y: 1365.5, w: 158 },
  { t: "Polen", x: 1415, y: 851, w: 98 },
  { t: "Ungarn", x: 1394, y: 1598, w: 128 },
];

function GermanyMap() {
  return (
    <div className="relative ml-[24px] mt-[28px] h-[1251px] w-[1369px] border-2 border-[#e6e6e6] bg-white">
      <svg className="block h-full w-full" viewBox="66 332 1365 1247" preserveAspectRatio="none" fill="none">
        <path d={landPath} fill="#e8e8e8" stroke="#f6f6f6" strokeWidth="2.500" />
        {STATES.map((s) => (
          <path key={s.id} d={s.shape} fill="#e8e8e8" />
        ))}
        <g fill="#f8f8f8">
          {LAKES.map((s) => (
            <path key={s} d={d(pts(s), true)} />
          ))}
        </g>
        <path d={STREAKS.map((s) => d(pts(s))).join("")} stroke="#f6f6f6" strokeWidth="2" />
        <g strokeLinejoin="round" strokeLinecap="round">
          <path d={countryPath + frontier} stroke="#f4f4f4" strokeWidth="16" />
          <path d={adminPath} stroke="#f1f1f1" strokeWidth="5.500" />
          <path d={adminPath} stroke="#848484" strokeWidth="1.900" />
          <path d={countryPath} stroke="#8f8f8f" strokeWidth="2.700" />
        </g>
        <path d={d(pts(LAKE_CONSTANCE), true)} fill="#ffffff" />
        <g fontFamily="'Noto Sans', sans-serif" fontSize="38" fontWeight="500" fill="#858585" stroke="#f0f0f0" strokeWidth="4.500" strokeLinejoin="round" paintOrder="stroke">
          {LABELS.map((l) => (
            <text key={l.t} x={l.x} y={l.y} textLength={l.w} lengthAdjust="spacingAndGlyphs" textAnchor={l.anchor ?? "start"}>
              {l.t}
            </text>
          ))}
        </g>
        <g fillOpacity="0.850">
          {STATES.map((s) => (
            <path key={s.id} d={s.shape} fill={s.fill} />
          ))}
        </g>
        <path d={stateLines} stroke="#6f6f6f" strokeWidth="1.600" strokeLinejoin="round" />
      </svg>
      <div className="absolute bottom-[3px] left-[4px] flex h-[24px] w-[260px] items-center bg-white/85 pl-[6px] font-['Liberation_Sans',Arial,sans-serif] text-[16.500px] leading-none tracking-[-0.25px] whitespace-nowrap text-[#4a4a4a]">
        © 2023 Mapbox © OpenStreetMap
      </div>
    </div>
  );
}

/* ------------------------------------------------------------------ */
/* Date filter                                                         */
/* ------------------------------------------------------------------ */

function DateFilter() {
  return (
    <div className="pt-[29px] pl-[25px]">
      <div className="-ml-px h-6 text-[24px] leading-6 font-medium tracking-[-0.5px] text-[#333]">Date</div>
      <div className="mt-[20px] flex h-6 items-center text-[23px] leading-6 font-light tracking-[0.25px] text-[#333] [-webkit-text-stroke:0.3px]">
        <span className="ml-[23px] w-[168px] pt-px">31.03.2014</span>
        <div className="relative -mt-[2px] h-[8px] w-[986px] bg-[#e6e6e6]">
          <div className="absolute top-0 left-[476px] h-[8px] w-[116px] bg-[#b3b3b3]" />
          <div className="absolute -top-[7px] left-[459px] h-[22px] w-[17px] rounded-l-full border-2 border-[#666] bg-white" />
          <div className="absolute -top-[7px] left-[590px] h-[22px] w-[17px] rounded-r-full border-2 border-[#666] bg-white" />
        </div>
        <span className="ml-[46px] pt-px">19.07.2014</span>
      </div>
    </div>
  );
}

/* ------------------------------------------------------------------ */
/* Quarter table                                                       */
/* ------------------------------------------------------------------ */

const ROWS = [
  ["262", "22.545", "2.000.469", "375.907"],
  ["817", "28.179", "1.629.171", "370.114"],
  ["1114", "24.873", "1.544.113", "350.423"],
  ["788", "26.910", "1.377.613", "312.558"],
  ["251", "25.568", "1.376.375", "310.160"],
  ["733", "16.352", "1.390.200", "291.308"],
  ["513", "24.476", "1.329.904", "301.190"],
  ["383", "23.313", "1.282.596", "288.321"],
  ["698", "22.589", "1.214.446", "302.346"],
  ["756", "27.773", "1.229.305", "276.285"],
  ["335", "27.866", "1.198.145", "254.043"],
  ["842", "19.585", "1.398.077", ""],
  ["586", "18.973", "1.107.042", "252.761"],
  ["380", "20.871", "1.103.526", "252.918"],
  ["259", "13.706", "1.116.862", "230.401"],
  ["320", "21.885", "1.091.432", "247.240"],
  ["595", "23.286", "1.087.061", "240.614"],
];

function QuarterTable() {
  return (
    <section className="flex h-[870px] flex-col pl-[10px] text-[#333]">
      <h2 className="mt-[42px] h-10 pl-[8px] text-[40px] leading-10 font-light tracking-[0.7px] [-webkit-text-stroke:0.4px]">Umsatz pro Quartal und Jahr</h2>
      <div className="mt-[38px] ml-[161px] h-6 w-[480px] text-center text-[24px] leading-6 font-medium tracking-[-0.3px]">Quartal von Date</div>
      <div className="mt-[15px] flex h-[32px] w-[641px] text-[24px] leading-6 font-medium tracking-[0px]">
        <div className="flex w-[160px] border-b-2 border-[#c8c8c8] pl-[12px]">
          <span>Store</span>
          <svg className="mt-[4px] ml-[35px]" width="20" height="20" viewBox="0 0 20 20" fill="#666">
            <rect width="20" height="4" />
            <rect y="8" width="12" height="4" />
            <rect y="16" width="6" height="4" />
          </svg>
        </div>
        <div className="flex flex-1 border-b border-[#c8c8c8] text-right">
          <span className="w-[151px]">2014 Q1</span>
          <span className="w-[160px]">2014 Q2</span>
          <span className="w-[160px]">2014 Q3</span>
        </div>
      </div>
      <div className="flex h-[679px] overflow-hidden">
        <div className="w-[641px] shrink-0">
          {ROWS.map(([id, q1, q2, q3], i) => (
            <div key={id} className={"flex h-10 text-[24px] leading-10 " + (i % 2 ? "bg-[#f5f5f5]" : "bg-white")}>
              <span className="w-[160px] pl-[12px] text-[23.500px] font-medium tracking-[0.2px]">{id}</span>
              <span className="w-[152px] text-right font-light tracking-[0.5px] [-webkit-text-stroke:0.3px]">{q1}</span>
              <span className="w-[160px] text-right font-light tracking-[0.5px] [-webkit-text-stroke:0.3px]">{q2}</span>
              <span className="w-[160px] text-right font-light tracking-[0.5px] [-webkit-text-stroke:0.3px]">{q3}</span>
            </div>
          ))}
        </div>
        <div className="ml-[1px] flex w-[34px] justify-center border-x-2 border-[#ececec] bg-[#fafafa] pt-[5px] pl-[4px]">
          <div className="h-[36px] w-[16px] rounded-full bg-[#7f7f7f]" />
        </div>
      </div>
    </section>
  );
}

/* ------------------------------------------------------------------ */
/* Line chart                                                          */
/* ------------------------------------------------------------------ */

const XS = [1624.5, 1848, 2067, 2290.500, 2508];
const SERIES: { id: string; color: string; ys: number[] }[] = [
  { id: "TH", color: "#e15759", ys: [1449, 1407.2, 1407.8, 1407.8, 1421] },
  { id: "ST", color: "#86bcb6", ys: [1448.5, 1385.3, 1387, 1388.7, 1408] },
  { id: "SN", color: "#499894", ys: [1446, 1355.4, 1357.4, 1357.5, 1388.5] },
  { id: "SH", color: "#f1ce63", ys: [1444, 1304.8, 1305.6, 1307.2, 1350] },
  { id: "RP", color: "#b6992d", ys: [1449.5, 1409, 1409, 1409.5, 1423.5] },
  { id: "NW", color: "#8cd17d", ys: [1427, 1067, 1065.2, 1074, 1194] },
  { id: "HH", color: "#59a14f", ys: [1451, 1411.6, 1411.6, 1412.8, 1425.6] },
  { id: "HE", color: "#ffbe7d", ys: [1444.5, 1306.8, 1305.8, 1310.2, 1355.6] },
  { id: "BY", color: "#f28e2b", ys: [1438.7, 1229.6, 1226, 1234.6] },
  { id: "BW", color: "#a0cbe8", ys: [1447.5, 1366, 1365, 1369.4, 1395.2] },
  { id: "BE", color: "#4e79a7", ys: [1443.8, 1307.2, 1306.2, 1308.6, 1355] },
];
const Y_TICKS: [string, number, number][] = [
  ["40M", 1150, 1160.5],
  ["20M", 1302, 1312.5],
  ["0M", 1452, 1462.5],
];
const X_TICKS: [string, number, number][] = [
  ["März", 1622.500, 1622.500],
  ["April", 1847, 1846],
  ["Mai", 2065, 2064],
  ["Juni", 2289, 2288.500],
  ["Juli", 2507, 2506.500],
];

function LineChart() {
  return (
    <svg width="1120" height="560" viewBox="1450 1024 1120 560" fill="none" className="block">
      <path d="M1577 1042V1472M1566 1150H2554M1566 1302H2554M1577 1472H2554" stroke="#f0f0f0" strokeWidth="1.600" />
      <path d="M1566 1452.500H1577" stroke="#f0f0f0" strokeWidth="1.600" />
      <path d="M1577 1452H2552" stroke="#c0c0c0" strokeWidth="1.600" strokeDasharray="4 2" />
      {X_TICKS.map(([t, x]) => (
        <path key={t} d={`M${x} 1474v8`} stroke="#ececec" strokeWidth="2" />
      ))}
      <path d="M1577 1474v2M1779 1474v2M2003 1474v2M2221 1474v2M2445 1474v2" stroke="#ececec" strokeWidth="2" />
      {SERIES.map((s) => (
        <polyline key={s.id} points={s.ys.map((y, i) => `${XS[i]},${y}`).join(" ")} stroke={s.color} strokeWidth="6" strokeLinecap="round" strokeLinejoin="round" />
      ))}
      <g fontFamily="'Noto Sans', sans-serif" fontWeight="300" fontSize="23.500" fill="#5a5a5a" stroke="#5a5a5a" strokeWidth="0.300">
        {Y_TICKS.map(([t, , y]) => (
          <text key={t} x="1561" y={y} textAnchor="end">
            {t}
          </text>
        ))}
        {X_TICKS.map(([t, , x]) => (
          <text key={t} x={x} y="1511.500" textAnchor="middle" letterSpacing="1">
            {t}
          </text>
        ))}
      </g>
      <g fontFamily="'Noto Sans', sans-serif" fontWeight="500" fontSize="24" fill="#333">
        <text x="1935" y="1559.500" textLength="259" lengthAdjust="spacing">
          Monat von Date [2014]
        </text>
        <text transform="translate(1490 1285) rotate(-90)" fontSize="22.500" textLength="60" lengthAdjust="spacing">
          Sales
        </text>
      </g>
    </svg>
  );
}

const LEGEND = [
  ["BE", "bg-[#4e79a7]"],
  ["BW", "bg-[#a0cbe8]"],
  ["BY", "bg-[#f28e2b]"],
  ["HE", "bg-[#ffbe7d]"],
  ["HH", "bg-[#59a14f]"],
  ["NW", "bg-[#8cd17d]"],
  ["RP", "bg-[#b6992d]"],
  ["SH", "bg-[#f1ce63]"],
  ["SN", "bg-[#499894]"],
  ["ST", "bg-[#86bcb6]"],
  ["TH", "bg-[#e15759]"],
];

function Legend() {
  return (
    <div className="mt-[21px] w-[200px] text-[#333]">
      <div className="h-6 text-[24px] leading-6 font-medium tracking-[0.3px]">State</div>
      <div className="mt-[7px]">
        {LEGEND.map(([id, swatch]) => (
          <div key={id} className="flex h-10 items-center gap-[10px] pl-[6px] text-[24px] leading-10 font-light tracking-[0.5px] [-webkit-text-stroke:0.3px]">
            <span className={"h-[28px] w-[28px] " + swatch} />
            <span className="pt-[2px]">{id}</span>
          </div>
        ))}
      </div>
    </div>
  );
}

/* ------------------------------------------------------------------ */
/* Sheet tabs                                                          */
/* ------------------------------------------------------------------ */

function GridIcon() {
  return (
    <svg width="23" height="22" viewBox="0 0 23 22" fill="none" stroke="#666" strokeWidth="2" className="shrink-0">
      <rect x="1" y="1" width="20.500" height="20" rx="1" />
      <path d="M11.300 1v20M1 10.800h20.500" />
    </svg>
  );
}

function Tab({ label, className, icon, active }: { label: string; className: string; icon?: React.ReactNode; active?: boolean }) {
  return (
    <div
      className={
        "flex h-[57px] shrink-0 items-center border-r-2 border-[#c8c8c8] text-[24px] leading-6 whitespace-nowrap text-[#4c4c4c] " +
        (active ? "bg-[#fbfbfb] font-semibold tracking-[-0.35px] " : "tracking-[-0.4px] ") +
        className
      }
    >
      {icon}
      <span>{label}</span>
    </div>
  );
}

function AddTab({ children }: { children: React.ReactNode }) {
  return (
    <div className="flex h-[57px] w-[63.500px] shrink-0 items-center border-r-2 border-[#c8c8c8] pt-[3px] pl-[18px]">
      <svg width="30" height="30" viewBox="0 0 30 30" fill="none" stroke="#666" strokeWidth="2">
        {children}
        <path d="M15.500 22h14M22.500 15v14" strokeWidth="4" />
      </svg>
    </div>
  );
}

function SheetTabs() {
  return (
    <footer className="flex h-[63px] w-full shrink-0 items-start border-t-2 border-b-2 border-t-[#c8c8c8] border-b-[#cfcfcf] bg-[#e6e6e6] pt-[1px]">
      <Tab
        label="Datenquelle"
        className="w-[252px] gap-[12px] pl-[9px]"
        icon={
          <svg width="17" height="22" viewBox="0 0 17 22" fill="none" stroke="#666" strokeWidth="1.800">
            <ellipse cx="8.500" cy="4.800" rx="7" ry="3.800" />
            <path d="M1.500 4.800V17.500q1 3.500 7 3.500t7-3.500V4.800" />
          </svg>
        }
      />
      <Tab label="Map" className="w-[77px] pl-[12px]" />
      <Tab label="Tabelle" className="w-[106px] pl-[12px]" />
      <Tab label="Zeitreihe-Bundesland" className="w-[272px] pl-[11px]" />
      <Tab label="Umsatz-Kunde" className="w-[196px] pl-[11px]" />
      <Tab label="Verkaufszahlen-Kunde" className="w-[282px] pl-[11px]" />
      <Tab label="Anzahl-Kunden" className="w-[200px] pl-[11px]" />
      <Tab label="Piechart-Storetype" className="w-[244px] pl-[11px]" />
      <Tab label="Dashboard 1" active className="w-[208px] gap-[8px] pl-[15px]" icon={<GridIcon />} />
      <Tab label="Dashboard 2" className="w-[209px] gap-[8px] pl-[15px]" icon={<GridIcon />} />
      <AddTab>
        <path d="M12.500 21.500H1V1H21.500V12" />
        <path d="M6.500 12v5M11.300 7v10M16 10v6" strokeWidth="1.800" />
      </AddTab>
      <AddTab>
        <path d="M12.500 21.500H1V1H21.500V12M1 11H21.500M11.300 1V21.500" />
      </AddTab>
      <AddTab>
        <path d="M12 23L1.500 19.500V1.500L11.500 5.500L21.500 1.500V12M11.500 5.500V20" />
      </AddTab>
    </footer>
  );
}

/* ------------------------------------------------------------------ */

export default function App() {
  return (
    <div className="flex h-[1782px] w-[3004px] flex-col overflow-hidden bg-[#f4f4f4] font-['Noto_Sans',sans-serif]">
      <Toolbar />
      <div className="flex h-[1649px] w-full shrink-0">
        <SideRail />
        <main className="flex h-[1535px] w-[2732px] bg-white">
          <div className="w-[1400px] shrink-0">
            <DateFilter />
            <h2 className="mt-[95px] h-10 pl-[32px] text-[40px] leading-10 font-light tracking-[0.45px] text-[#333] [-webkit-text-stroke:0.4px]">Umsatz pro Bundesland</h2>
            <GermanyMap />
          </div>
          <div className="flex w-[1332px] flex-col">
            <QuarterTable />
            <section className="flex">
              <div className="w-[1130px] pl-[10px]">
                <h2 className="mt-[33px] h-10 pl-[8px] text-[40px] leading-10 font-light tracking-[0.4px] text-[#333] [-webkit-text-stroke:0.4px]">Umsatz pro Bundesland und Monat</h2>
                <div className="mt-[11px]">
                  <LineChart />
                </div>
              </div>
              <Legend />
            </section>
          </div>
        </main>
      </div>
      <SheetTabs />
    </div>
  );
}
